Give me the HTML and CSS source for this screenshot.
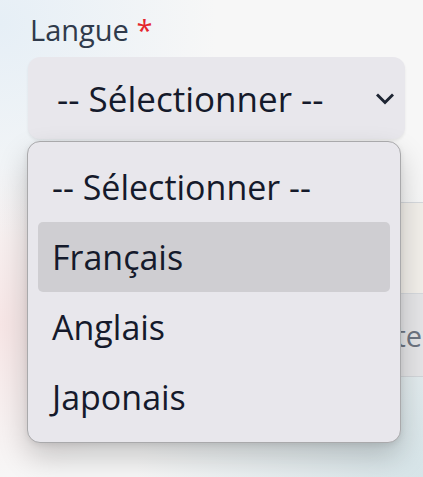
FILE: index.html
```html
<!DOCTYPE html>
<html lang="fr">
<head>
<meta charset="utf-8">
<title>Langue</title>
<link rel="stylesheet" href="styles.css">
</head>
<body>
<div class="page">
  <div class="field">
    <label class="label">Langue <span class="req">*</span></label>
    <div class="select">
      <span class="select-value">-- Sélectionner --</span>
      <svg class="chevron" width="18" height="12" viewBox="0 0 18 12"><path d="M2 2.5 L9 9.5 L16 2.5" fill="none" stroke="#1e2533" stroke-width="3" stroke-linecap="square"/></svg>
    </div>
  </div>
  <div class="rows">
    <div class="row row-a"></div>
    <div class="row row-b"><span class="placeholder">Numéro de carte</span></div>
  </div>
  <ul class="menu">
    <li class="opt">-- Sélectionner --</li>
    <li class="opt active">Français</li>
    <li class="opt">Anglais</li>
    <li class="opt">Japonais</li>
  </ul>
</div>
</body>
</html>
```

FILE: styles.css
```css
html, body {
  margin: 0;
  padding: 0;
  height: 100%;
  overflow: hidden;
}
body {
  font-family: "Open Sans", "Noto Sans", sans-serif;
  background:
    radial-gradient(circle at 0% 5%, rgba(228, 238, 246, 0.9), rgba(228, 238, 246, 0) 35%),
    radial-gradient(circle at 0% 68%, rgba(247, 228, 228, 0.9), rgba(247, 228, 228, 0) 30%),
    radial-gradient(circle at 100% 100%, rgba(214, 228, 232, 1), rgba(214, 228, 232, 0) 45%),
    #f7f7f7;
}
.page {
  position: relative;
  padding: 14px 18px 0 28px;
  height: 100%;
  box-sizing: border-box;
}
.label {
  display: block;
  font-size: 29px;
  line-height: 32px;
  color: #2f3a4b;
  padding-left: 2px;
}
.req {
  color: #e5262c;
}
.select {
  margin-top: 11px;
  height: 82px;
  width: 377px;
  box-sizing: border-box;
  border-radius: 12px;
  background: #e8e7ec;
  box-shadow: 0 2px 3px rgba(0, 0, 0, 0.07);
  display: flex;
  align-items: center;
  justify-content: space-between;
  padding: 0 11px 0 29px;
}
.select-value {
  font-size: 35px;
  color: #151a2b;
}
.chevron {
  display: block;
  margin-top: 2px;
}
.rows {
  margin-top: 63px;
  margin-right: -18px;
}
.row {
  border-top: 1.5px solid #d6d9dd;
}
.row-a {
  height: 90px;
  background: #f2efea;
}
.row-b {
  height: 82px;
  background: #e5e5e7;
  border-bottom: 1.5px solid #d2d5d9;
  display: flex;
  align-items: center;
  justify-content: flex-end;
  padding-right: 1px;
}
.placeholder {
  font-size: 29px;
  color: #6d7480;
  white-space: nowrap;
}
.menu {
  position: absolute;
  top: 141px;
  left: 27px;
  width: 374px;
  margin: 0;
  padding: 10px;
  box-sizing: border-box;
  list-style: none;
  background: #e8e7ec;
  border: 1.5px solid #a9a9ab;
  border-radius: 13px;
  box-shadow: 0 14px 30px rgba(0, 0, 0, 0.2), 0 2px 6px rgba(0, 0, 0, 0.08);
}
.opt {
  height: 70px;
  display: flex;
  align-items: center;
  padding-left: 14px;
  font-size: 34px;
  color: #151a2b;
  border-radius: 5px;
}
.opt.active {
  background: #cfced2;
}
```
